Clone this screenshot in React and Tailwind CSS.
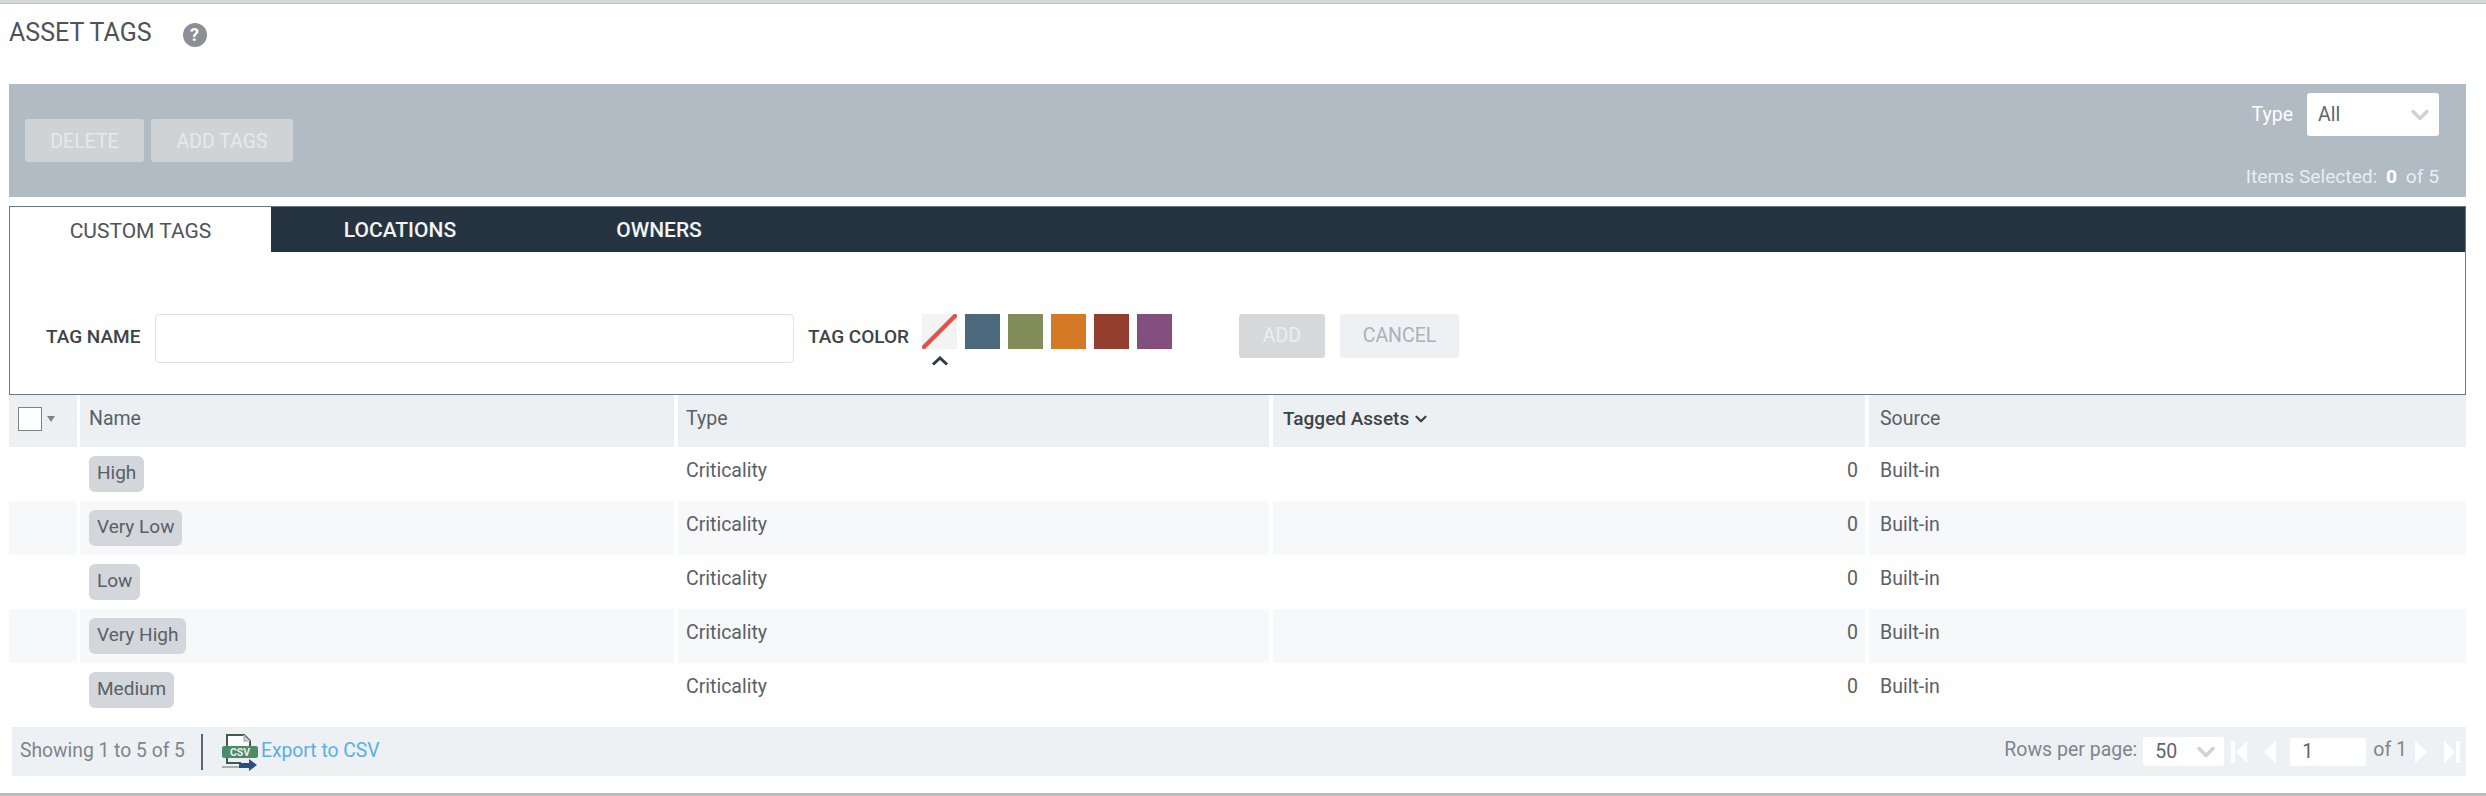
import React from "react";
import { ChevronDown } from "lucide-react";

const rows = ["High", "Very Low", "Low", "Very High", "Medium"];
const swatches = ["bg-[#4c687c]", "bg-[#838d59]", "bg-[#d47a27]", "bg-[#943e30]", "bg-[#824f7f]"];

const SelectBox = ({ label, className }) => (
  <div className={`flex items-center justify-between rounded-[3px] bg-white text-[#5b6670] ${className}`}>
    <span>{label}</span>
    <ChevronDown size={28} strokeWidth={3} className="text-[#cdd3d8]" />
  </div>
);

// csv file icon next to the export link
const CsvIcon = () => (
  <svg width="38" height="38" viewBox="0 0 38 38" className="shrink-0">
    <path d="M6 14V2h17l6 6v6" fill="#fff" stroke="#3f5a50" strokeWidth="2" />
    <path d="M23 2v6h6" fill="#c9cdd2" stroke="#b5b9be" strokeWidth="1.5" />
    <rect x="1" y="13" width="36" height="12" rx="2" fill="#4d8a6a" />
    <text x="19" y="23" textAnchor="middle" fontSize="10.5" fontWeight="700" fill="#e8f2ec" fontFamily="Roboto, sans-serif">CSV</text>
    <path d="M6 25v5h14" fill="none" stroke="#3f5a50" strokeWidth="2" />
    <path d="M1 34h22" stroke="#8a9a94" strokeWidth="1.5" />
    <path d="M18 30h10v-4l8 6-8 6v-3H18z" fill="#2b4f85" />
  </svg>
);

const PagerArrow = ({ d }) => (
  <svg width="16" height="26" viewBox="0 0 16 26" className="shrink-0">
    <path d={d} fill="#ffffff" />
  </svg>
);

const TableRow = ({ name, striped }) => (
  <div className={`flex h-[54px] items-center text-[19.5px] text-[#5a6068] ${striped ? "bg-[#f6f8f9]" : "bg-white"}`}>
    <div className="h-full w-[71px] border-r-[3px] border-white" />
    <div className="flex h-full w-[598px] items-center border-r-[4px] border-white pl-[9px]">
      <span className="flex h-9 items-center rounded-[6px] bg-[#d3d6da] px-2 pb-[2px] text-[19px] text-[#5a5f68]">{name}</span>
    </div>
    <div className="flex h-full w-[595px] items-center border-r-[4px] border-white pb-[6px] pl-[8px]">Criticality</div>
    <div className="flex h-full w-[596px] items-center justify-end border-r-[4px] border-white pb-[6px] pr-[7px]">0</div>
    <div className="pb-[6px] pl-[11px]">Built-in</div>
  </div>
);

export default function App() {
  return (
    <div className="flex h-[796px] w-full flex-col justify-between overflow-hidden bg-white font-['Roboto',sans-serif]">
      <div className="h-1 shrink-0 border-b border-[#bcc3c5] bg-[#d4d9da]" />

      <div className="flex flex-1 flex-col pl-[9px] pr-5">
        <div className="flex h-[80px] items-start pt-[15px]">
          <h1 className="text-[25px] leading-[28px] text-[#4e5358]">ASSET TAGS</h1>
          <span className="ml-[31px] mt-[4px] flex h-6 w-6 items-center justify-center rounded-full bg-[#8c9095] text-[18px] font-bold leading-none text-white">?</span>
        </div>

        {/* toolbar */}
        <div className="flex h-[113px] justify-between bg-[#b0bbc3] pl-4 pr-[27px]">
          <div className="flex items-start gap-[7px] pt-[35px]">
            <button className="h-[43px] w-[119px] rounded-[3px] bg-[#d0d3d5] pt-[2px] text-[19.5px] text-[#e7e9ea]">DELETE</button>
            <button className="h-[43px] w-[142px] rounded-[3px] bg-[#d0d3d5] pt-[2px] text-[19.5px] text-[#e7e9ea]">ADD TAGS</button>
          </div>
          <div className="flex flex-col items-end pt-[9px]">
            <div className="flex items-center gap-[14px] text-[19.5px] text-white">
              <span>Type</span>
              <SelectBox label="All" className="h-[43px] w-[132px] pl-[11px] pr-[5px]" />
            </div>
            <div className="mt-[27px] text-[19.2px] leading-[28px] text-[#e9edf0]">
              Items Selected: <span className="ml-1 font-bold text-white">0</span> <span className="ml-1">of 5</span>
            </div>
          </div>
        </div>

        {/* tabs + add tag form */}
        <div className="mt-[9px] h-[189px] border border-[#6d777d]">
          <div className="flex h-[45px] bg-[#263442] text-[21px] font-medium text-[#f2f4f5]">
            <div className="flex h-[50px] w-[261px] items-center justify-center bg-white font-normal text-[#4e5358]">CUSTOM TAGS</div>
            <div className="flex h-full w-[258px] items-center justify-center pt-[2px]">LOCATIONS</div>
            <div className="flex h-full w-[260px] items-center justify-center pt-[2px]">OWNERS</div>
          </div>
          <div className="flex items-start pt-[62px]">
            <label className="ml-[36px] w-[109px] pt-[11px] text-[19px] font-medium leading-[24px] text-[#3e4349]">TAG NAME</label>
            <div className="h-[49px] w-[639px] rounded-[4px] border border-[#dfe2e5] bg-white" />
            <label className="ml-[14px] w-[114px] pt-[11px] text-[19px] font-medium leading-[24px] text-[#3e4349]">TAG COLOR</label>
            <div className="flex flex-col items-center">
              <div className="h-[35px] w-[35px] bg-[#f3f3f3]">
                <svg width="35" height="35" viewBox="0 0 35 35">
                  <path d="M2 33 33 2" stroke="#dc5450" strokeWidth="4.5" strokeLinecap="round" />
                </svg>
              </div>
              <svg width="18" height="10" viewBox="0 0 18 10" className="mt-[7px]">
                <path d="M2 8.5 9 2l7 6.5" fill="none" stroke="#2f3a45" strokeWidth="3" />
              </svg>
            </div>
            <div className="ml-[8px] flex gap-2">
              {swatches.map((color) => (
                <div key={color} className={`h-[35px] w-[35px] ${color}`} />
              ))}
            </div>
            <button className="ml-[67px] h-[44px] w-[86px] rounded-[3px] bg-[#d7d8da] text-[19.5px] text-[#eceef0]">ADD</button>
            <button className="ml-[15px] h-[44px] w-[119px] rounded-[3px] bg-[#eef1f4] text-[19.5px] text-[#a9b2b9]">CANCEL</button>
          </div>
        </div>

        {/* table */}
        <div className="flex h-[52px] items-center bg-[#ecf0f3] text-[19.5px] text-[#5a6068]">
          <div className="flex h-full w-[71px] items-center border-r-[3px] border-white pb-[4px] pl-[9px]">
            <span className="h-6 w-6 border border-[#7d858c] bg-white" />
            <span className="ml-[5px] h-0 w-0 border-x-[4px] border-t-[6px] border-x-transparent border-t-[#7d858c]" />
          </div>
          <div className="flex h-full w-[598px] items-center border-r-[4px] border-white pb-[4px] pl-[9px]">Name</div>
          <div className="flex h-full w-[595px] items-center border-r-[4px] border-white pb-[4px] pl-[8px]">Type</div>
          <div className="flex h-full w-[596px] items-center gap-[3px] border-r-[4px] border-white pb-[4px] pl-[10px] text-[19px] font-medium text-[#3e4349]">
            Tagged Assets
            <ChevronDown size={18} strokeWidth={3} />
          </div>
          <div className="pb-[4px] pl-[11px]">Source</div>
        </div>
        {rows.map((name, i) => (
          <TableRow key={name} name={name} striped={i % 2 === 1} />
        ))}

        {/* footer */}
        <div className="ml-[3px] mt-[10px] flex h-[49px] items-center justify-between bg-[#eef1f4] pl-2 pr-[6px] text-[19.5px] text-[#7d858c]">
          <div className="flex items-center text-[19.3px]">
            <span>Showing 1 to 5 of 5</span>
            <span className="ml-[16px] h-[36px] w-[2px] bg-[#5f666c]" />
            <span className="ml-[18px]"><CsvIcon /></span>
            <a className="ml-[2px] text-[#5aaee6]">Export to CSV</a>
          </div>
          <div className="flex items-center">
            <span className="mb-1">Rows per page:</span>
            <SelectBox label="50" className="ml-[6px] h-[29px] w-[81px] pl-3 pr-[4px]" />
            <span className="ml-[7px]"><PagerArrow d="M0 2h4v22H0zM16 2v22L5 13z" /></span>
            <span className="ml-[15px]"><PagerArrow d="M14 2v22L2 13z" /></span>
            <div className="ml-3 flex h-[28px] w-[76px] items-center rounded-[3px] bg-white pl-3 text-[#5b6670]">1</div>
            <span className="mb-1 ml-[7px]">of 1</span>
            <span className="ml-[6px]"><PagerArrow d="M2 2v22l12-11z" /></span>
            <span className="ml-[15px]"><PagerArrow d="M0 2v22l11-11zM12 2h4v22h-4z" /></span>
          </div>
        </div>
      </div>

      <div className="h-[3px] shrink-0 bg-[#b9bcbd]" />
    </div>
  );
}
